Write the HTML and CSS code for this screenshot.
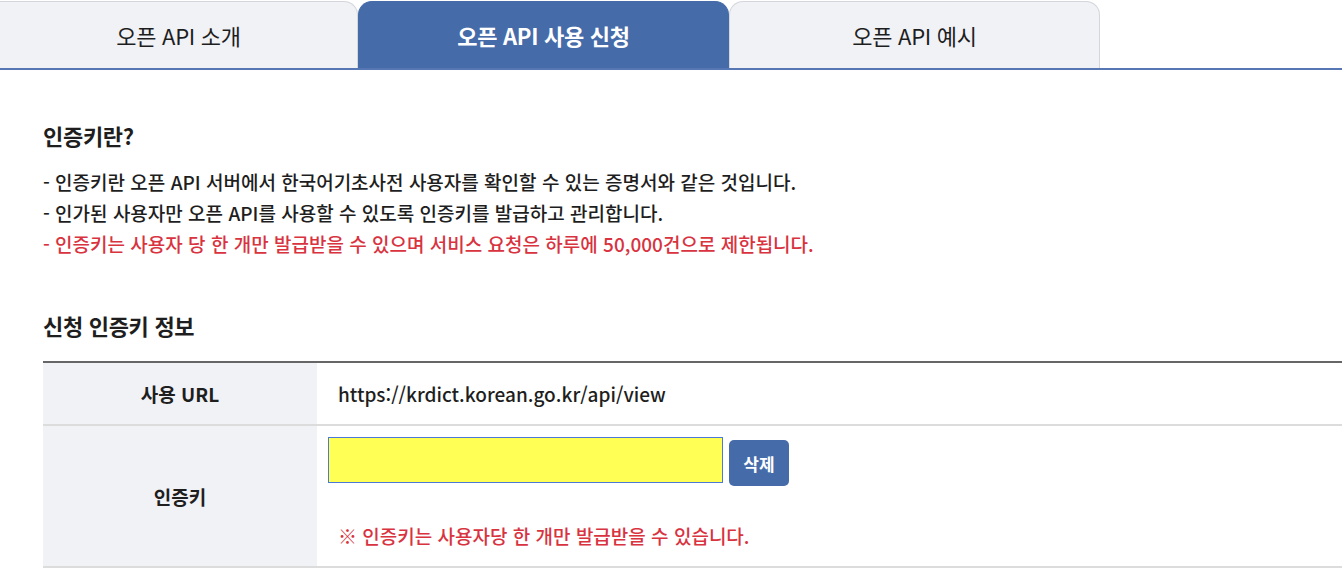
FILE: index.html
```html
<!DOCTYPE html>
<html lang="ko">
<head>
  <meta charset="UTF-8" />
  <title>오픈 API 사용 신청</title>
  <link rel="stylesheet" href="styles.css">
</head>
<body>
  <div class="tabs">
    <a class="tab first">오픈 API 소개</a>
    <a class="tab on">오픈 API 사용 신청</a>
    <a class="tab">오픈 API 예시</a>
  </div>

  <div class="content">
    <h3>인증키란?</h3>
    <ul class="desc">
      <li>- 인증키란 오픈 API 서버에서 한국어기초사전 사용자를 확인할 수 있는 증명서와 같은 것입니다.</li>
      <li>- 인가된 사용자만 오픈 API를 사용할 수 있도록 인증키를 발급하고 관리합니다.</li>
      <li class="red">- 인증키는 사용자 당 한 개만 발급받을 수 있으며 서비스 요청은 하루에 50,000건으로 제한됩니다.</li>
    </ul>

    <h3 class="sub">신청 인증키 정보</h3>
    <table class="info">
      <tr>
        <th>사용 URL</th>
        <td class="url">https://krdict.korean.go.kr/api/view</td>
      </tr>
      <tr>
        <th>인증키</th>
        <td class="key">
          <div class="keyrow">
            <input type="text" class="keybox" />
            <button class="btn">삭제</button>
          </div>
          <p class="note">※ 인증키는 사용자당 한 개만 발급받을 수 있습니다.</p>
        </td>
      </tr>
    </table>
  </div>
</body>
</html>
```

FILE: styles.css
```css
body { margin: 0; font-family: "Noto Sans CJK KR", "Noto Sans", sans-serif; font-weight: 500; color: #1e1e1e; background: #fff; overflow: hidden; }
.tabs { display: flex; height: 70px; padding-top: 1px; box-sizing: border-box; border-bottom: 2px solid #5677b3; }
.tab { display: flex; align-items: center; justify-content: center; width: 371px; box-sizing: border-box; background: #f1f2f6; border: 1px solid #d4d6dc; border-bottom: none; border-radius: 14px 14px 0 0; font-size: 22px; font-weight: 400; color: #1e1e1e; letter-spacing: -0.3px; }
.tab.first { width: 358px; border-left: none; border-top-left-radius: 0; }
.tab.on { background: #456ba9; border-color: #456ba9; color: #fff; font-weight: bold; }
.content { padding: 50px 0 0 43px; }
h3 { margin: 0 0 16px; font-size: 22px; font-weight: bold; letter-spacing: -0.3px; line-height: 30px; }
.desc { list-style: none; margin: 0; padding: 0; font-size: 19px; line-height: 31px; }
.desc .red { color: #d8333f; }
h3.sub { margin: 51px 0 21px; }
.info { width: 100%; border-collapse: collapse; border-top: 2px solid #666; font-size: 19px; }
.info th, .info td { padding: 0; border-bottom: 2px solid #dcdcdc; }
.info th { width: 274px; background: #f1f2f6; font-weight: bold; height: 61px; }
.info td.url { padding-left: 21px; }
.info td.key { padding: 11px 0 15px 11px; }
.keyrow { display: flex; align-items: flex-start; gap: 6px; }
.keybox { width: 395px; height: 46px; box-sizing: border-box; margin: 0; background: #ffff55; border: 1px solid #4a7ad6; }
.btn { margin-top: 3px; width: 60px; height: 46px; background: #456ba9; color: #fff; border: none; border-radius: 5px; font-family: inherit; font-size: 17px; font-weight: bold; }
.note { margin: 35px 0 0 10px; color: #d8333f; line-height: 30px; }
```
